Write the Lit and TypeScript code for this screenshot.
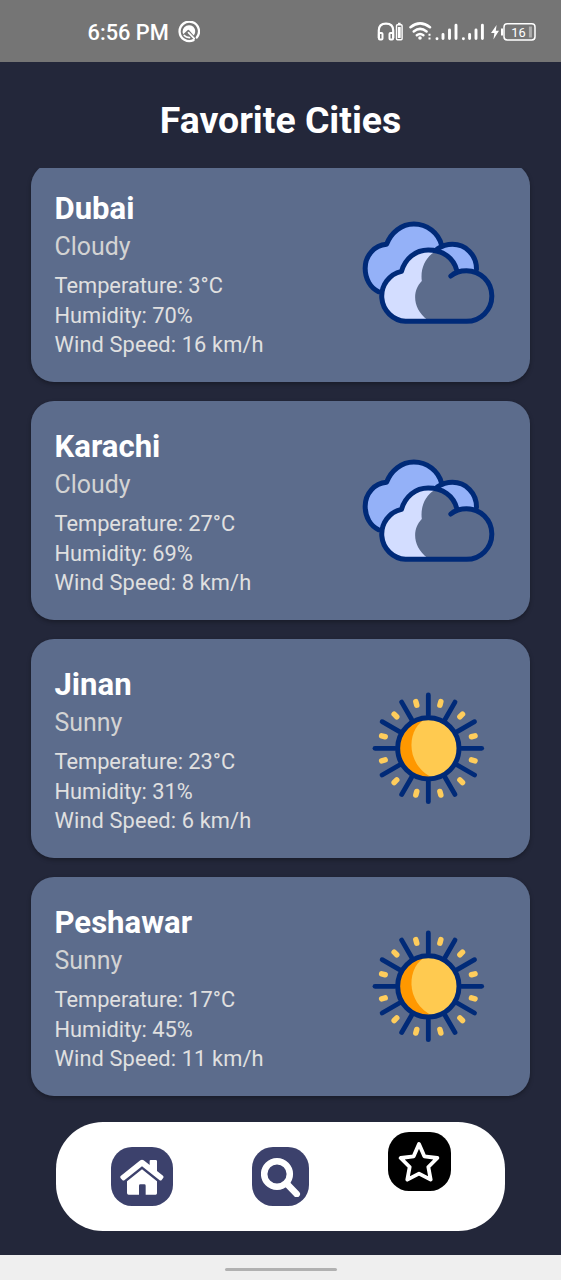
import { LitElement, html, css, svg } from "lit";
import { customElement, property } from "lit/decorators.js";

interface City {
  name: string;
  condition: "Cloudy" | "Sunny";
  temperature: number;
  humidity: number;
  wind: number;
}

const CITIES: City[] = [
  { name: "Dubai", condition: "Cloudy", temperature: 3, humidity: 70, wind: 16 },
  { name: "Karachi", condition: "Cloudy", temperature: 27, humidity: 69, wind: 8 },
  { name: "Jinan", condition: "Sunny", temperature: 23, humidity: 31, wind: 6 },
  { name: "Peshawar", condition: "Sunny", temperature: 17, humidity: 45, wind: 11 },
];

const LONG_RAYS = Array.from({ length: 12 }, (_, i) => i * 30);
const SHORT_RAYS = LONG_RAYS.map((a) => a + 15);

@customElement("weather-icon")
class WeatherIcon extends LitElement {
  @property() condition = "Cloudy";

  static styles = css`
    :host { display: block; }
    svg { display: block; width: 140px; height: 140px; }
  `;

  render() {
    return this.condition === "Sunny" ? this.sun() : this.cloud();
  }

  private cloud() {
    return html`<svg viewBox="24.5 -9 420 420" stroke-linecap="round" stroke-linejoin="round">
      <path d="M92 262C62 249 46 222 46 190C46 151 74 121 110 118C124 82 155 57 192 57C232 57 266 84 275 120L262 132Q284 118 308 118C348 118 380 150 380 190V200L320 240L100 262Z" fill="#94b1f8"/>
      <path d="M86 260C62 249 46 222 46 190C46 151 74 121 110 118C124 82 155 57 192 57C232 57 266 84 275 120M262 132Q284 118 308 118C348 118 380 150 380 192" fill="none" stroke="#002a78" stroke-width="15"/>
      <path d="M167 349A76 76 0 0 1 155 199C166 161 197 135 235 135C278 135 314 160 322 198Q336 197 350 197A76 76 0 0 1 350 349Z" fill="#5c6c8c"/>
      <path d="M167 349A76 76 0 0 1 155 199C166 161 197 135 235 135L254 141C226 158 211 192 216 228C186 258 188 311 233 345V349Z" fill="#d3ddff"/>
      <path d="M303 213C315 202 332 197 350 197A76 76 0 0 1 350 349H167A76 76 0 0 1 155 199C166 161 197 135 235 135C278 135 312 158 321 197" fill="none" stroke="#002a78" stroke-width="15"/>
    </svg>`;
  }

  private sun() {
    return html`<svg viewBox="-211 -211 420 420" stroke-linecap="round">
      ${LONG_RAYS.map((a) => svg`<path d="M0-100V-160" transform="rotate(${a})" stroke="#002a78" stroke-width="14.5"/>`)}
      ${SHORT_RAYS.map((a) => svg`<path d="M0-134V-145" transform="rotate(${a})" stroke="#ffcd5c" stroke-width="16.5"/>`)}
      <circle r="92" fill="#ff9800"/>
      <path d="M-4-90C-65-65-74 50 16 90C65 84 92 45 92 0C92-52 48-94-4-90Z" fill="#ffca50"/>
      <circle r="92" fill="none" stroke="#002a78" stroke-width="15"/>
    </svg>`;
  }
}

@customElement("city-card")
class CityCard extends LitElement {
  @property({ attribute: false }) city!: City;

  static styles = css`
    :host {
      display: flex;
      flex: none;
      box-sizing: border-box;
      height: 219px;
      padding: 25px 32px 0 23.5px;
      justify-content: space-between;
      border-radius: 23px;
      background: #5c6c8c;
      box-shadow: 0 2px 4px rgba(0, 0, 0, 0.3);
    }
    .name { margin: 0; font-size: 31.1px; line-height: 42px; font-weight: 700; color: #fff; }
    .condition { margin-bottom: 8px; font-size: 24.9px; line-height: 33px; color: #d3d3d3; }
    .detail { font-size: 21.8px; line-height: 29.6px; color: #e0e0e0; }
    .wind { letter-spacing: 0.13px; }
    weather-icon { margin-top: 14px; }
  `;

  render() {
    const c = this.city;
    return html`
      <div>
        <h2 class="name">${c.name}</h2>
        <div class="condition">${c.condition}</div>
        <div class="detail">Temperature: ${c.temperature}°C</div>
        <div class="detail">Humidity: ${c.humidity}%</div>
        <div class="detail wind">Wind Speed: ${c.wind} km/h</div>
      </div>
      <weather-icon .condition=${c.condition}></weather-icon>
    `;
  }
}

@customElement("status-bar")
class StatusBar extends LitElement {
  static styles = css`
    :host {
      display: flex;
      flex: none;
      box-sizing: border-box;
      height: 62px;
      padding: 2px 25px 0 87.5px;
      align-items: center;
      background: #757575;
      color: #fff;
    }
    .time { width: 90.5px; font-size: 21.8px; line-height: 30px; font-weight: 500; margin-top: 2px; white-space: nowrap; }
    .tray { margin-left: auto; }
    svg { display: block; }
  `;

  render() {
    return html`
      <div class="time">6:56 PM</div>
      <svg width="22" height="22" viewBox="0 0.5 22 22" fill="none" stroke="#fff" stroke-linecap="round">
        <path d="M18.8 17A9.7 9.7 0 1 0 15.5 19.6" stroke-width="2.3"/>
        <path d="M5.2 13.7A6.3 6.3 0 0 1 16.8 8.4Q18 12 15.7 14.9L11.2 9.7Q10.2 8.9 9.2 9.9Z" fill="#fff" stroke="none"/>
        <path d="M6.3 15Q8 17 11.5 17.2M10.5 12.2L16.3 18.2" stroke-width="1.7"/>
      </svg>
      <svg class="tray" width="160" height="24" viewBox="376 20 160 24" fill="none" stroke="#fff">
        <path d="M378.8 38V30.5Q378.8 23.6 386 23.6T393.2 30.5V38" stroke-width="2.2"/>
        <rect x="378.9" y="33" width="3.6" height="6.5" rx="1" stroke-width="2"/>
        <rect x="389.5" y="33" width="3.6" height="6.5" rx="1" stroke-width="2"/>
        <rect x="396.5" y="24.8" width="5.6" height="15" rx="1" stroke-width="1.4"/>
        <path d="M398 23.5H400.6" stroke-width="1.5"/>
        <path d="M399.3 27V38" stroke-width="2.8"/>
        <g stroke-width="2.5" stroke-linecap="round">
          <path d="M410.5 27.2Q420 19.5 430 27.2"/>
          <path d="M413.7 31.5Q420 26.3 426.6 31.5"/>
          <path d="M416.8 35.3Q420 32.7 423.4 35.3"/>
        </g>
        <circle cx="420" cy="38" r="1.8" fill="#fff" stroke="none"/>
        <path d="M429.5 33.7V35.7M429.5 37.4V39.4" stroke-width="2"/>
        <g stroke-width="2.9" stroke-linecap="round">
          <path d="M437 38.6V38.7M443 34.5V38.6M449.5 30V38.6M456 25.2V38.6"/>
          <path d="M463.4 38.6V38.7M469.6 34.5V38.6M476 30V38.6M482.4 25.2V38.6"/>
        </g>
        <path d="M496.6 25L491 33H494.4L493.4 39.5L499 30.8H495.8Z" fill="#fff" stroke="none"/>
        <path d="M502 28.6V35.4" stroke-width="2"/>
        <rect x="504" y="23.8" width="31" height="16.2" rx="3.2" stroke-width="1.5"/>
        <path d="M530.4 26.5V37.5" stroke="#adadad" stroke-width="3"/>
        <text x="511.3" y="36.6" font-size="12.8" fill="#fff" stroke="none">16</text>
      </svg>
    `;
  }
}

@customElement("tab-bar")
class TabBar extends LitElement {
  static styles = css`
    :host {
      display: flex;
      flex: none;
      box-sizing: border-box;
      width: 449px;
      height: 109px;
      padding: 0 54.5px;
      align-items: center;
      justify-content: space-between;
      border-radius: 47px;
      background: #fff;
    }
    .tab {
      display: grid;
      place-items: center;
      width: 62.5px;
      height: 59.5px;
      padding: 1px 0 0;
      border: 0;
      border-radius: 21px;
      background: #3c416c;
    }
    .search { width: 57.5px; }
    .active { margin-bottom: 30.5px; background: #000; }
    svg { display: block; }
  `;

  render() {
    return html`
      <button class="tab" aria-label="Home">
        <svg width="46" height="42" viewBox="0 -6 138 126">
          <path d="M5 54L64 7Q69 3 74 7L92 21V9Q92 6 95 6H110Q114 6 114 10V39L132 53Q136 57 132 61L128 66Q125 69 121 66L69 25L17 66Q13 69 10 66L5 61Q2 57 5 54Z" fill="#fff"/>
          <path d="M24 70L69 34L114 70V106Q114 110 110 110H80V83Q80 79 76 79H64Q60 79 60 83V110H29Q24 110 24 105Z" fill="#fff"/>
        </svg>
      </button>
      <button class="tab search" aria-label="Search">
        <svg width="40" height="40" viewBox="1 -2 120 120" fill="none" stroke="#fff">
          <circle cx="49" cy="49" r="38.5" stroke-width="19.5"/>
          <path d="M82 82L108 109" stroke-width="20" stroke-linecap="round"/>
        </svg>
      </button>
      <button class="tab active" aria-label="Favorites">
        <svg width="42" height="42" viewBox="0 -1 126 126" fill="none" stroke="#fff" stroke-width="11.5" stroke-linejoin="round">
          <path d="M63 8L79 45L118 50L91 77L98 115L63 97L28 115L35 77L8 50L47 45Z"/>
        </svg>
      </button>
    `;
  }
}

@customElement("app-root")
class AppRoot extends LitElement {
  static styles = css`
    :host {
      display: flex;
      flex-direction: column;
      height: 1280px;
      overflow: hidden;
      background: #23273a;
      font-family: Roboto, sans-serif;
    }
    .title {
      flex: none;
      height: 106px;
      margin: 0;
      padding-top: 35px;
      box-sizing: border-box;
      text-align: center;
      font-size: 37.4px;
      line-height: 46px;
      font-weight: 700;
      color: #fff;
    }
    .cities {
      display: flex;
      flex-direction: column;
      justify-content: flex-end;
      gap: 19px;
      flex: none;
      height: 954px;
      box-sizing: border-box;
      padding: 0 31px 26px;
      overflow: hidden;
    }
    .tabs {
      display: flex;
      justify-content: center;
      flex: 1;
    }
    .gesture {
      display: flex;
      flex: none;
      box-sizing: border-box;
      height: 25px;
      padding-top: 12.5px;
      justify-content: center;
      background: #efefef;
    }
    .pill { width: 112px; height: 3px; border-radius: 1.5px; background: #b1b1b1; }
  `;

  render() {
    return html`
      <status-bar></status-bar>
      <h1 class="title">Favorite Cities</h1>
      <div class="cities">
        ${CITIES.map((c) => html`<city-card .city=${c}></city-card>`)}
      </div>
      <div class="tabs"><tab-bar></tab-bar></div>
      <div class="gesture"><div class="pill"></div></div>
    `;
  }
}
